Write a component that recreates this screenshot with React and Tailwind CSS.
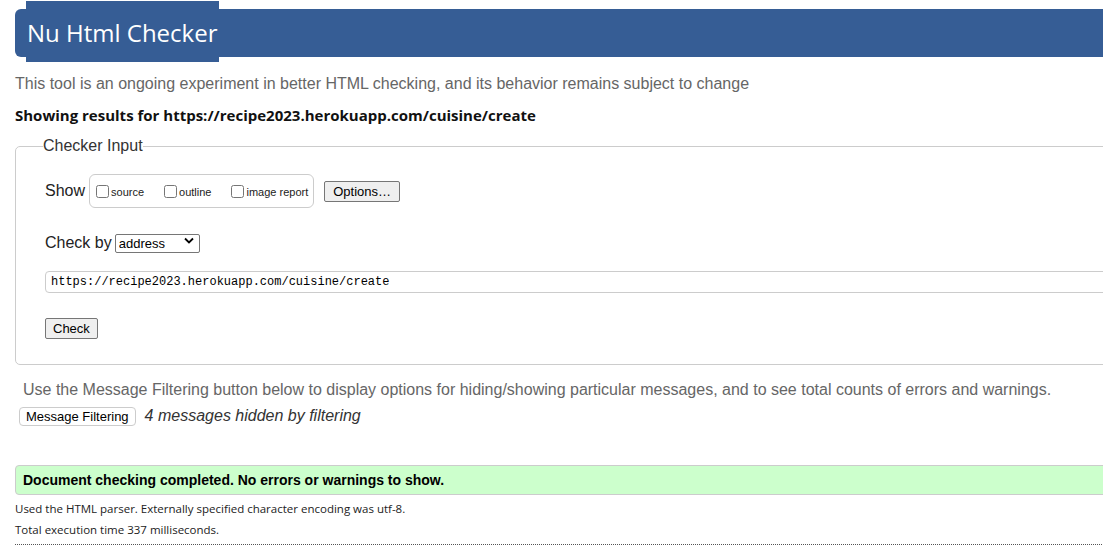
import { useState } from "react";

const arial = "font-['Liberation_Sans',Arial,sans-serif]";
const segoe = "font-['Open_Sans','Noto_Sans',sans-serif]";

const Chevron = () => (
  <svg width="10" height="7" viewBox="0 0 10 7" className="pointer-events-none absolute right-[6px] top-[6px]">
    <path d="M1 1.5 L5 5.5 L9 1.5" fill="none" stroke="#000" strokeWidth="1.8" />
  </svg>
);

const App = () => {
  const [url, setUrl] = useState("https://recipe2023.herokuapp.com/cuisine/create");
  const [show, setShow] = useState({ source: false, outline: false, image: false });

  return (
    <div className={`w-[1103px] h-[549px] overflow-hidden bg-white ${arial}`}>
      <div className="w-[1150px]">
        {/* Header */}
        <div className="ml-[15px] mt-[9px] h-[48px] bg-[#365d95] rounded-l-[6px] flex">
          <h1
            className={`ml-[11px] -mt-[8px] h-[61px] bg-[#365d95] flex items-center pt-[3px] px-[1px] text-white text-[24px] ${segoe}`}
          >
            Nu Html Checker
          </h1>
        </div>

        <p className="ml-[15px] mt-[18px] text-[16px] leading-[18px] text-[#666]">
          This tool is an ongoing experiment in better HTML checking, and its behavior remains subject to change
        </p>

        <p className={`ml-[15px] mt-[12px] text-[15px] leading-[20px] font-bold text-[#111] ${segoe}`}>
          Showing results for https://recipe2023.herokuapp.com/cuisine/create
        </p>

        {/* Checker input */}
        <fieldset className="ml-[15px] mt-[12px] border border-[#ccc] rounded-[5px] px-[29px] pb-[24px]">
          <legend className="-ml-[2px] text-[16px] leading-[18px] text-[#333]">Checker Input</legend>

          <div className="mt-[19px] flex items-center">
            <span className="text-[16px] text-[#222]">Show</span>
            <div className="ml-[4px] h-[34px] border border-[#ccc] rounded-[6px] flex items-center pl-[6px] pr-[5px] text-[11px] text-[#222]">
              <label className="flex items-center">
                <input
                  type="checkbox"
                  checked={show.source}
                  onChange={() => setShow({ ...show, source: !show.source })}
                  className="w-[13px] h-[13px] m-0 mr-[2px]"
                />
                <span className="mt-[3px]">source</span>
              </label>
              <label className="flex items-center ml-[20px]">
                <input
                  type="checkbox"
                  checked={show.outline}
                  onChange={() => setShow({ ...show, outline: !show.outline })}
                  className="w-[13px] h-[13px] m-0 mr-[2px]"
                />
                <span className="mt-[3px]">outline</span>
              </label>
              <label className="flex items-center ml-[20px]">
                <input
                  type="checkbox"
                  checked={show.image}
                  onChange={() => setShow({ ...show, image: !show.image })}
                  className="w-[13px] h-[13px] m-0 mr-[2px]"
                />
                <span className="mt-[3px]">image report</span>
              </label>
            </div>
            <button className="ml-[10px] h-[21px] px-[8px] bg-[#efefef] border border-[#767676] rounded-[2px] text-[13px] leading-[15px] text-black">
              Options…
            </button>
          </div>

          <div className="mt-[23px] flex items-center">
            <span className="text-[16px] text-[#222]">Check by</span>
            <div className="relative ml-[3px]">
              <select className="appearance-none w-[85px] h-[19px] border border-[#767676] rounded-[2px] pl-[3px] text-[13px] leading-[15px] text-black bg-white">
                <option>address</option>
                <option>file upload</option>
                <option>text input</option>
              </select>
              <Chevron />
            </div>
          </div>

          <input
            value={url}
            onChange={(e) => setUrl(e.target.value)}
            className="mt-[16px] block w-full h-[22px] border border-[#ccc] rounded-[4px] px-[5px] text-[12px] text-black font-['Liberation_Mono','DejaVu_Sans_Mono',monospace]"
          />

          <button className="mt-[25px] h-[21px] px-[7px] bg-[#efefef] border border-[#767676] rounded-[2px] text-[13px] leading-[15px] text-black">
            Check
          </button>
        </fieldset>

        {/* Message filtering */}
        <p className="ml-[23px] mt-[16px] text-[16px] leading-[18px] text-[#666]">
          Use the Message Filtering button below to display options for hiding/showing particular messages, and to see total counts of errors and warnings.
        </p>
        <div className="ml-[19px] mt-[5px] flex items-center">
          <button className="h-[19px] px-[6px] bg-white border border-[#ccc] rounded-[4px] text-[13px] leading-[15px] text-black">
            Message Filtering
          </button>
          <span className="ml-[9px] text-[16px] italic text-[#333]">4 messages hidden by filtering</span>
        </div>

        {/* Result */}
        <div className="ml-[15px] mt-[37px] h-[30px] bg-[#ccffcc] border border-[#ccc] rounded-l-[4px] flex items-center pl-[7px]">
          <span className="text-[14px] font-bold text-black">
            Document checking completed. No errors or warnings to show.
          </span>
        </div>

        <p className={`ml-[15px] mt-[6px] text-[11.5px] leading-[16px] text-[#222] ${segoe}`}>
          Used the HTML parser. Externally specified character encoding was utf-8.
        </p>
        <p className={`ml-[15px] mt-[5px] text-[11.5px] leading-[16px] text-[#222] ${segoe}`}>
          Total execution time 337 milliseconds.
        </p>
        <div className="ml-[15px] mt-[6px] border-t border-dotted border-[#555]" />
      </div>
    </div>
  );
};

export default App;
